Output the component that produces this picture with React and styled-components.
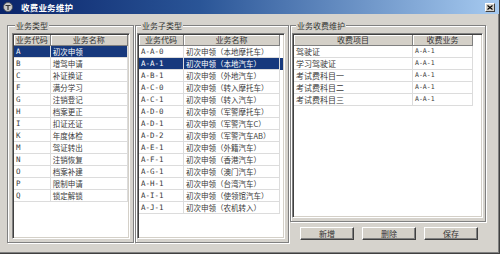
import React from 'react'
import styled, { createGlobalStyle } from 'styled-components'

const GlobalStyle = createGlobalStyle`
  html, body { margin:0; padding:0; background:#d4d0c8; }
  body { width:500px; height:254px; overflow:hidden; font-family:"Noto Sans CJK SC", "Noto Sans", sans-serif; }
`

const Window = styled.div`
  width:500px;
  height:254px;
  box-sizing:border-box;
  display:flex;
  flex-direction:column;
  background:#d6d3cd;
  border-right:1px solid #404040;
  border-bottom:1px solid #404040;
  box-shadow:inset -1px -1px 0 #808080;
`
const TitleBar = styled.div`
  height:14px;
  flex:none;
  display:flex;
  align-items:center;
  padding:0 4px 0 3px;
  background:linear-gradient(90deg,#0a246a 0%,#2a5597 40%,#a6caf0 100%);
  color:#fff;
`
const Title = styled.span`
  margin-left:8px;
  font-size:8.5px;
  font-weight:bold;
  line-height:14px;
  letter-spacing:0.2px;
`
const CloseBtn = styled.div`
  margin-left:auto;
  width:10px;
  height:9px;
  box-sizing:border-box;
  background:#d4d0c8;
  border:1px solid;
  border-color:#fff #404040 #404040 #fff;
  display:flex;
  align-items:center;
  justify-content:center;
`
const Body = styled.div`
  flex:1;
  display:flex;
  align-items:flex-start;
  padding:11px 0 0 7px;
`
const Column = styled.div`
  display:flex;
  flex-direction:column;
`
const Group = styled.div`
  position:relative;
  box-sizing:border-box;
  display:flex;
  width:${p => p.$w}px;
  height:${p => p.$h}px;
  margin-right:${p => p.$mr || 0}px;
  padding:7px ${p => p.$pr}px 3px ${p => p.$pl}px;
  border:1px solid #808080;
  box-shadow:inset 1px 1px 0 #fff, 1px 1px 0 #fff;
`
const Legend = styled.span`
  position:absolute;
  top:-6px;
  left:${p => p.$left}px;
  padding:0 1px;
  background:#d6d3cd;
  font-size:8px;
  line-height:11px;
  color:#333;
`
const ListBox = styled.div`
  flex:1;
  box-sizing:border-box;
  background:#fff;
  padding:1px;
  overflow:hidden;
  border:1px solid;
  border-color:#808080 #fff #fff #808080;
  box-shadow:inset 1px 1px 0 #404040, inset -1px -1px 0 #d4d0c8;
`
const HeaderRow = styled.div`
  display:flex;
  height:11px;
`
const HeadCell = styled.div`
  width:${p => p.$w}px;
  box-sizing:border-box;
  background:#d4d0c8;
  border-right:1px solid #808080;
  border-bottom:1px solid #808080;
  box-shadow:inset 1px 1px 0 #fff;
  font-size:8px;
  line-height:10px;
  text-align:center;
  color:#333;
  white-space:nowrap;
`
const Row = styled.div`
  display:flex;
  height:12px;
  background:${p => (p.$sel ? '#17397d' : '#fff')};
  color:${p => (p.$sel ? '#fff' : '#3a3a3a')};
`
const Cell = styled.div`
  width:${p => p.$w}px;
  box-sizing:border-box;
  padding-left:2px;
  border-right:1px solid #dcdcdc;
  border-bottom:1px solid #dcdcdc;
  font-family:${p => (p.$mono ? '"DejaVu Sans Mono", monospace' : 'inherit')};
  font-size:${p => p.$fs}px;
  line-height:11px;
  white-space:nowrap;
  overflow:hidden;
`
const ButtonRow = styled.div`
  display:flex;
  gap:8px;
  margin-top:5px;
  padding-left:10px;
`
const Button = styled.button`
  width:54px;
  height:13px;
  padding:0;
  box-sizing:border-box;
  background:#d4d0c8;
  border:1px solid;
  border-color:#fff #404040 #404040 #fff;
  box-shadow:inset -1px -1px 0 #808080;
  font-family:inherit;
  font-size:8px;
  line-height:10px;
  color:#333;
`

const types = [
  ['A', '初次申领'], ['B', '增驾申请'], ['C', '补证换证'], ['F', '满分学习'],
  ['G', '注销登记'], ['H', '档案更正'], ['I', '扣证还证'], ['K', '年度体检'],
  ['M', '驾证转出'], ['N', '注销恢复'], ['O', '档案补建'], ['P', '限制申请'],
  ['Q', '锁定解锁'],
]

const subTypes = [
  ['A-A-0', '初次申领（本地摩托车）'], ['A-A-1', '初次申领（本地汽车）'],
  ['A-B-1', '初次申领（外地汽车）'], ['A-C-0', '初次申领（转入摩托车）'],
  ['A-C-1', '初次申领（转入汽车）'], ['A-D-0', '初次申领（军警摩托车）'],
  ['A-D-1', '初次申领（军警汽车C）'], ['A-D-2', '初次申领（军警汽车AB）'],
  ['A-E-1', '初次申领（外籍汽车）'], ['A-F-1', '初次申领（香港汽车）'],
  ['A-G-1', '初次申领（澳门汽车）'], ['A-H-1', '初次申领（台湾汽车）'],
  ['A-I-1', '初次申领（使领馆汽车）'], ['A-J-1', '初次申领（农机转入）'],
]

const fees = ['驾驶证', '学习驾驶证', '考试费科目一', '考试费科目二', '考试费科目三']

function AppIcon() {
  return (
    <svg width="10" height="10" viewBox="0 0 10 10">
      <circle cx="5" cy="5" r="4.5" fill="#c9c9c9" stroke="#555" strokeWidth="0.8" />
      <path d="M2.5 3.5 H7.5 M5 3.5 V8" stroke="#333" strokeWidth="1.2" />
    </svg>
  )
}

export default function App() {
  return (
    <>
      <GlobalStyle />
      <Window>
        <TitleBar>
          <AppIcon />
          <Title>收费业务维护</Title>
          <CloseBtn>
            <svg width="6" height="5" viewBox="0 0 6 5">
              <path d="M0.5 0.5 L5.5 4.5 M5.5 0.5 L0.5 4.5" stroke="#000" strokeWidth="1.1" />
            </svg>
          </CloseBtn>
        </TitleBar>
        <Body>
          <Group $w={127} $h={218} $pl={4} $pr={3} $mr={1}>
            <Legend $left={7}>业务类型</Legend>
            <ListBox>
              <HeaderRow>
                <HeadCell $w={37}>业务代码</HeadCell>
                <HeadCell $w={78}>业务名称</HeadCell>
              </HeaderRow>
              {types.map(([code, name], i) => (
                <Row key={code} $sel={i === 0}>
                  <Cell $w={37} $mono $fs={7.5}>{code}</Cell>
                  <Cell $w={78} $fs={7.5}>{name}</Cell>
                </Row>
              ))}
            </ListBox>
          </Group>
          <Group $w={154} $h={218} $pl={1} $pr={3} $mr={1}>
            <Legend $left={5}>业务子类型</Legend>
            <ListBox>
              <HeaderRow>
                <HeadCell $w={45}>业务代码</HeadCell>
                <HeadCell $w={96}>业务名称</HeadCell>
              </HeaderRow>
              {subTypes.map(([code, name], i) => (
                <Row key={code} $sel={i === 1}>
                  <Cell $w={45} $mono $fs={7.5}>{code}</Cell>
                  <Cell $w={96} $fs={7.5}>{name}</Cell>
                </Row>
              ))}
            </ListBox>
          </Group>
          <Column>
            <Group $w={196} $h={197} $pl={1} $pr={2}>
              <Legend $left={5}>业务收费维护</Legend>
              <ListBox>
                <HeaderRow>
                  <HeadCell $w={119}>收费项目</HeadCell>
                  <HeadCell $w={60}>收费业务</HeadCell>
                </HeaderRow>
                {fees.map(name => (
                  <Row key={name}>
                    <Cell $w={119} $fs={8}>{name}</Cell>
                    <Cell $w={60} $mono $fs={6.5}>A-A-1</Cell>
                  </Row>
                ))}
              </ListBox>
            </Group>
            <ButtonRow>
              <Button>新增</Button>
              <Button>删除</Button>
              <Button>保存</Button>
            </ButtonRow>
          </Column>
        </Body>
      </Window>
    </>
  )
}
